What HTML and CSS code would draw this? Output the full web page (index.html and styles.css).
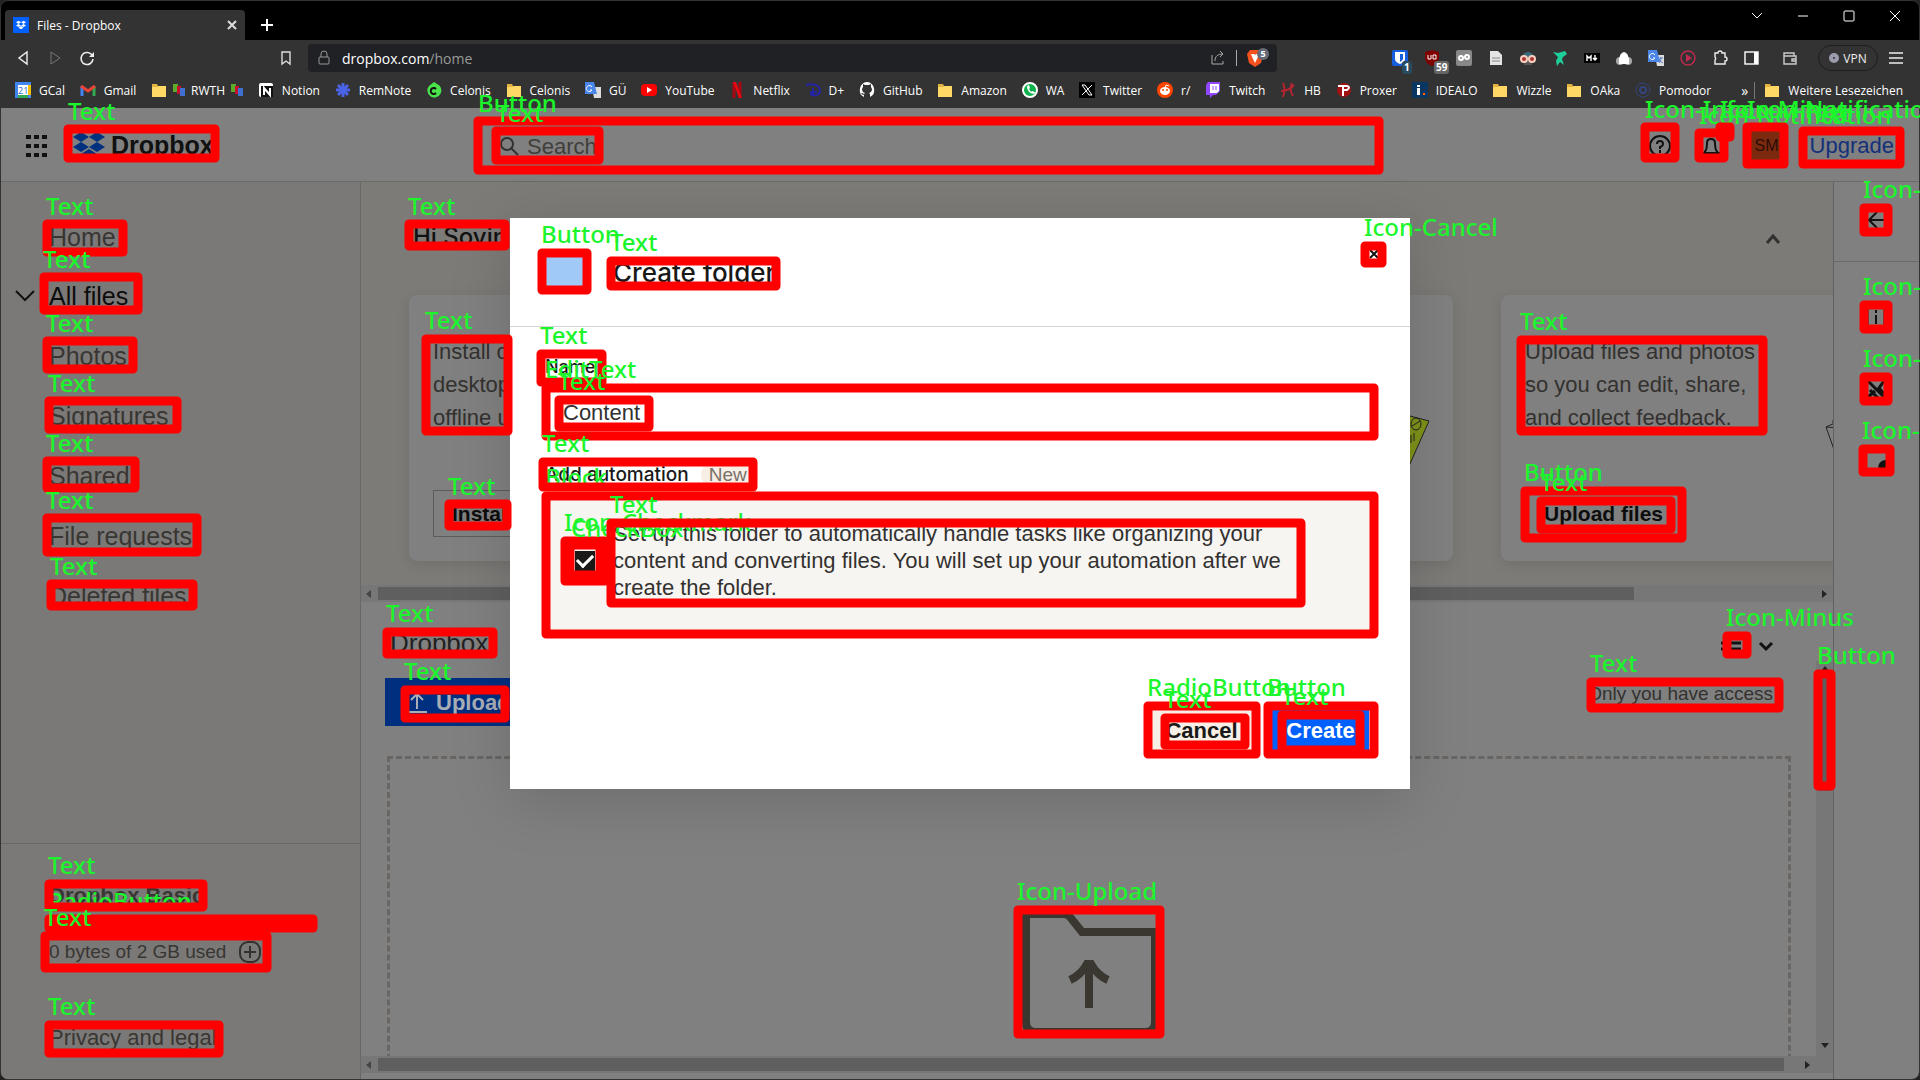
FILE: index.html
```html
<!DOCTYPE html>
<html lang="en">
<head>
<meta charset="utf-8">
<title>Files - Dropbox</title>
<link rel="stylesheet" href="styles.css">
</head>
<body>
<svg class="defs" aria-hidden="true">
  <symbol id="folder" viewBox="0 0 16 16"><path d="M1 2h5l1 2h8v11H1z" fill="#e3b341"/><path d="M1 5h5l2-1h7v11H1z" fill="#ffd866"/></symbol>
  <symbol id="flag" viewBox="0 0 12 14"><path d="M0 1h5v8H0z" fill="#5cab2b"/><path d="M4 3h4v8H4z" fill="#c8102e"/><path d="M7 5h5v8H7z" fill="#3f6fd1"/></symbol>
  <symbol id="box" viewBox="0 0 32 27"><path d="M8 0l8 5-8 5-8-5zM24 0l8 5-8 5-8-5zM8 10l8 5-8 5-8-5zM24 10l8 5-8 5-8-5zM16 17l8 5-8 5-8-5z"/></symbol>
</svg>
<div class="window">
  <div class="tabs">
    <div class="tab"><svg class="i16" viewBox="0 0 16 16"><path d="M0 0h16v16H0z" fill="#0061fe"/><use href="#box" x="3" y="3" width="10" height="10" fill="#fff"/></svg><span>Files - Dropbox</span><svg class="close" viewBox="0 0 10 10"><path d="M1 1l8 8M9 1l-8 8" stroke="#ddd" stroke-width="2"/></svg></div>
    <svg class="plus" viewBox="0 0 12 12"><path d="M6 0v12M0 6h12" stroke="#fff" stroke-width="2"/></svg>
    <div class="winbtns">
      <svg viewBox="0 0 12 12"><path d="M1 3l5 5 5-5"/></svg><svg viewBox="0 0 12 12"><path d="M1 6h10"/></svg><svg viewBox="0 0 12 12"><rect x="1" y="1" width="10" height="10" rx="1"/></svg><svg viewBox="0 0 12 12"><path d="M1 1l10 10M11 1L1 11"/></svg>
    </div>
  </div>
  <div class="toolbar">
    <svg class="i16" viewBox="0 0 16 16"><path d="M12 2v12L4 8z" fill="none" stroke="#eee" stroke-width="1.4"/></svg>
    <svg class="i16" viewBox="0 0 16 16"><path d="M4 2v12l9-6z" fill="none" stroke="#777" stroke-width="1"/></svg>
    <svg class="i16" viewBox="0 0 16 16"><path d="M14 9a6 6 0 1 1-2-5l2 2" fill="none" stroke="#eee" stroke-width="1.6"/><path d="M15 2v5h-5z" fill="#eee"/></svg>
    <svg class="i16 mark" viewBox="0 0 16 16"><path d="M4 2h8v12l-4-3-4 3z" fill="none" stroke="#ddd" stroke-width="1.4"/></svg>
    <div class="address">
      <svg class="i16" viewBox="0 0 16 16"><rect x="3" y="7" width="10" height="7" rx="1" fill="none" stroke="#999"/><path d="M5 7V4a3 3 0 0 1 6 0v3" fill="none" stroke="#999"/></svg>
      <span class="url">dropbox.com<i>/home</i></span>
      <svg class="i16" viewBox="0 0 16 16"><path d="M2 5v9h11v-3M5 11c0-5 3-7 8-7M10 1l3 3-3 3" fill="none" stroke="#aaa"/></svg>
      <span class="bar"></span>
      <span class="brave"><svg viewBox="0 0 16 18"><path d="M3 1h10l3 4-2 9-6 4-6-4L0 5z" fill="#f4511e"/><path d="M4 5h3l1 1 1-1h3l-2 5-2 4-2-4z" fill="#fff"/></svg><b>5</b></span>
    </div>
    <div class="exts">
      <span class="ext"><svg class="i16" viewBox="0 0 16 16"><rect width="16" height="16" rx="2" fill="#175ddc"/><path d="M3 2h10v7q0 3-5 5-5-2-5-5z" fill="#fff"/><path d="M8 4h3v5q0 1-3 3z" fill="#175ddc"/></svg><b class="teal">1</b></span>
      <span class="ext"><svg class="i16" viewBox="0 0 16 16"><path d="M8 0l7 2v6q0 5-7 8-7-3-7-8V2z" fill="#800000"/><path d="M4 5v4h3V5M9 9V5h3v4z" fill="none" stroke="#fff"/></svg><b>59</b></span>
      <svg class="i16" viewBox="0 0 16 16"><rect width="16" height="16" rx="2" fill="#888"/><circle cx="5" cy="8" r="2" fill="none" stroke="#fff" stroke-width="2"/><circle cx="11" cy="7" r="2" fill="none" stroke="#fff" stroke-width="2"/></svg>
      <svg class="i16" viewBox="0 0 16 16"><path d="M2 1h8l4 4v10H2z" fill="#e4e4e4"/><path d="M4 8h8M4 11h8" stroke="#888"/></svg>
      <svg class="i16" viewBox="0 0 16 16"><path d="M2 8a6 6 0 0 1 12 0z" fill="#35697c"/><path d="M4 11h8v4H4z" fill="#555"/><circle cx="4" cy="9" r="3" fill="#a33" stroke="#fbd0c0" stroke-width="2"/><circle cx="12" cy="9" r="3" fill="#a33" stroke="#fbd0c0" stroke-width="2"/></svg>
      <svg class="i16" viewBox="0 0 16 16"><path d="M1 2l5 1 7-2 2 3-4 3-1 2 2 6-4-3-3 4-1-5 2-4z" fill="#1fcf9b"/></svg>
      <svg class="i16" viewBox="0 0 16 16"><rect y="3" width="16" height="10" fill="#000"/><path d="M3 11V6l2 2 2-2v5M11 5v5M9 8l2 2 2-2" fill="none" stroke="#fff" stroke-width="1.4"/></svg>
      <svg class="i16" viewBox="0 0 16 16"><circle cx="4" cy="11" r="4" fill="#aaa"/><circle cx="12" cy="11" r="4" fill="#aaa"/><path d="M3 14V9q1-6 5-7 4 1 5 7v5z" fill="#fff"/></svg>
      <svg class="i16" viewBox="0 0 16 16"><path d="M7 5h9v11H9z" fill="#ddd"/><path d="M0 0h9l3 12H0z" fill="#4a86e8"/><path d="M7 5a3 3 0 1 0 0 3H5" fill="none" stroke="#fff"/><path d="M11 8h4M13 7v1q0 4-2 5M11 9q1 3 4 4" fill="none" stroke="#5a7fc0"/></svg>
      <svg class="i16" viewBox="0 0 16 16"><circle cx="8" cy="8" r="7" fill="none" stroke="#c2294e" stroke-width="1.4"/><path d="M6 4l6 4-6 4z" fill="#c2294e"/></svg>
      <svg class="i16" viewBox="0 0 16 16"><path d="M3 3h3a2 2 0 0 1 4 0h3v4a2 2 0 0 1 0 4v3H3v-4a2 2 0 0 0 0-3z" fill="none" stroke="#eee" stroke-width="1.4"/></svg>
      <svg class="i16" viewBox="0 0 16 16"><rect x="1" y="2" width="13" height="12" fill="none" stroke="#fff" stroke-width="1.4"/><path d="M10 2h4v12h-4z" fill="#fff"/></svg>
      <svg class="i16 wallet" viewBox="0 0 16 16"><path d="M2 3h10v3h2v8H2zM2 6h10M14 9h-4v2h4" fill="none" stroke="#ccc" stroke-width="1.4"/></svg>
    </div>
    <button class="vpn"><i></i>VPN</button>
    <svg class="i16" viewBox="0 0 16 16"><path d="M1 3h14M1 8h14M1 13h14" stroke="#eee" stroke-width="1.4"/></svg>
  </div>
  <div class="bookmarks">
    <div class="marks">
      <a href="#"><svg viewBox="0 0 16 16"><path d="M0 0h16v16H0z" fill="#4285f4"/><path d="M13 3h3v10h-3z" fill="#fbbc04"/><path d="M3 13h10v3H3z" fill="#34a853"/><path d="M3 3h10v10H3z" fill="#fff"/><text x="3" y="12" font-size="9" fill="#1967d2">21</text></svg>GCal</a>
      <a href="#"><svg viewBox="0 0 16 16"><path d="M2 14V4" stroke="#4285f4" stroke-width="3"/><path d="M14 14V4" stroke="#34a853" stroke-width="3"/><path d="M1 4l7 5 7-5" fill="none" stroke="#ea4335" stroke-width="3"/></svg>Gmail</a>
      <a href="#" class="rwth"><svg><use href="#folder"/></svg><svg class="flag"><use href="#flag"/></svg>RWTH<svg class="flag"><use href="#flag"/></svg></a>
      <a href="#"><svg viewBox="0 0 16 16"><rect x="1" y="1" width="14" height="14" rx="2" fill="#fff"/><path d="M3 4h12v11H3z" fill="#111"/><path d="M6 13V6l6 7V6" fill="none" stroke="#fff" stroke-width="2"/></svg>Notion</a>
      <a href="#"><svg viewBox="0 0 16 16"><path d="M8 1v14M1 8h14M3 3l10 10M13 3L3 13" stroke="#4b63e6" stroke-width="3"/></svg>RemNote</a>
      <a href="#"><svg viewBox="0 0 16 16"><path d="M8 0l3 2a7 7 0 1 1-8 2z" fill="#4be34b"/><path d="M10 7a3 3 0 1 0 0 4" fill="none" stroke="#111" stroke-width="2"/></svg>Celonis</a>
      <a href="#"><svg><use href="#folder"/></svg>Celonis</a>
      <a href="#"><svg viewBox="0 0 16 16"><path d="M7 5h9v11H9z" fill="#ddd"/><path d="M0 0h9l3 12H0z" fill="#4a86e8"/><path d="M7 5a3 3 0 1 0 0 3H5" fill="none" stroke="#fff"/></svg>GÜ</a>
      <a href="#"><svg viewBox="0 0 16 16"><rect y="2" width="16" height="12" rx="4" fill="#f00"/><path d="M6 5l5 3-5 3z" fill="#fff"/></svg>YouTube</a>
      <a href="#"><svg viewBox="0 0 16 16"><path d="M5 0v16M11 0v16" stroke="#a80610" stroke-width="3"/><path d="M4 0h3l6 16h-3z" fill="#e50914"/></svg>Netflix</a>
      <a href="#"><svg viewBox="0 0 16 16"><path d="M1 3c9-2 14 1 14 6s-8 5-9 3 1-3 6-2M8 6v8" fill="none" stroke="#2323a8" stroke-width="2"/></svg>D+</a>
      <a href="#"><svg viewBox="0 0 16 16"><path d="M8 0a8 8 0 0 0-3 15v-2q-2 0-3-2 2 0 3 1l1-1Q3 10 3 7l1-2V2l2 1h4l2-1v3l1 2q0 3-3 4l1 1v3A8 8 0 0 0 8 0" fill="#fff"/></svg>GitHub</a>
      <a href="#"><svg><use href="#folder"/></svg>Amazon</a>
      <a href="#"><svg viewBox="0 0 16 16"><circle cx="8" cy="8" r="7" fill="#0db14b" stroke="#fff" stroke-width="2"/><path d="M5 4q0 7 7 8l1-2-3-1-1 1-2-3 1-1-1-3z" fill="#fff"/></svg>WA</a>
      <a href="#"><svg viewBox="0 0 16 16"><path d="M0 0h16v16H0z"/><path d="M3 3h3l7 10h-3zM13 3L3 13" fill="none" stroke="#fff"/></svg>Twitter</a>
      <a href="#"><svg viewBox="0 0 16 16"><circle cx="8" cy="8" r="8" fill="#ff4500"/><ellipse cx="8" cy="9" rx="5" ry="4" fill="#fff"/><path d="M8 6l1-3 3 1" fill="none" stroke="#fff"/><circle cx="6" cy="8" r="1" fill="#ff4500"/><circle cx="10" cy="8" r="1" fill="#ff4500"/></svg>r/</a>
      <a href="#"><svg viewBox="0 0 16 16"><path d="M1 3l2-3h12v9l-4 4H8l-3 3v-3H1z" fill="#9146ff"/><path d="M5 2h9v7l-2 2H5z" fill="#fff"/><path d="M8 4v4M11 4v4" stroke="#9146ff"/></svg>Twitch</a>
      <a href="#"><svg viewBox="0 0 16 16"><path d="M3 1q3 6 0 14M12 1q-3 7 1 13M1 9q8 0 13-6" fill="none" stroke="#b3262f" stroke-width="2"/></svg>HB</a>
      <a href="#"><svg viewBox="0 0 16 16"><circle cx="8" cy="8" r="7" fill="#a11212"/><path d="M2 4h9q4 1 0 4H8M7 4v10" fill="none" stroke="#fff" stroke-width="2"/></svg>Proxer</a>
      <a href="#"><svg viewBox="0 0 16 16"><path d="M0 0h16v16H0z" fill="#0a3761"/><path d="M5 3h3v2H5zM5 6h3v7H5z" fill="#fff"/><path d="M11 11h2v2h-2z" fill="#f60"/></svg>IDEALO</a>
      <a href="#"><svg><use href="#folder"/></svg>Wizzle</a>
      <a href="#"><svg><use href="#folder"/></svg>OAka</a>
      <a href="#"><svg viewBox="0 0 16 16"><circle cx="8" cy="8" r="7" fill="none" stroke="#34457e"/><circle cx="8" cy="8" r="3" fill="none" stroke="#34457e" stroke-width="2"/></svg>Pomodor</a>
    </div>
    <span class="more">»</span>
    <a href="#" class="other"><svg><use href="#folder"/></svg>Weitere Lesezeichen</a>
  </div>

  <div class="page">
    <header class="top">
      <svg class="apps" viewBox="0 0 22 22"><path d="M0 2h5M8 2h5M16 2h5M0 11h5M8 11h5M16 11h5M0 20h5M8 20h5M16 20h5" stroke="#111" stroke-width="4"/></svg>
      <a class="brand" href="#"><svg viewBox="0 0 32 27"><use href="#box"/></svg>Dropbox</a>
      <label class="search"><svg viewBox="0 0 20 20"><circle cx="8" cy="8" r="6"/><path d="M12 12l7 7"/></svg><input type="text" placeholder="Search" aria-label="Search"></label>
      <div class="account">
        <svg class="i24" viewBox="0 0 24 24"><circle cx="12" cy="12" r="10"/><path d="M9 10q0-3 3-3t3 3q0 2-3 3v2M12 16v3"/></svg>
        <svg class="i24" viewBox="0 0 24 24"><path d="M5 18q3-1 3-9 0-4 4-4t4 4q0 8 3 9M3 19h18"/></svg>
        <span class="avatar">SM</span>
        <a href="#" class="upgrade">Upgrade</a>
      </div>
    </header>
    <aside class="side">
      <nav>
        <a href="#">Home</a>
        <a href="#" class="on"><svg viewBox="0 0 20 12"><path d="M1 1l9 9 9-9"/></svg>All files</a>
        <a href="#">Photos</a><a href="#">Signatures</a><a href="#">Shared</a><a href="#">File requests</a><a href="#">Deleted files</a>
      </nav>
      <div class="plan">
        <b>Dropbox Basic</b>
        <div class="quota">0 bytes of 2 GB used<svg viewBox="0 0 22 22"><rect x="1" y="1" width="20" height="20" rx="8"/><path d="M11 5v12M5 11h12"/></svg></div>
        <a href="#">Privacy and legal</a>
      </div>
    </aside>
    <main>
      <section class="home">
        <div class="hello"><h1>Hi Sovin</h1><svg viewBox="0 0 14 10"><path d="M1 9l6-7 6 7"/></svg></div>
        <div class="cards">
          <article class="card"><p>Install on<br>desktop for<br>offline use</p><button>Install</button></article>
          <article class="card"><svg class="note" viewBox="0 0 44 60"><path d="M6 0l38 10-20 45-24 5z" fill="#7f931a" stroke="#222"/><ellipse cx="31" cy="13" rx="5" ry="6" fill="none" stroke="#222"/><path d="M27 15l8-5M26 24v8M29 22v8" stroke="#222"/></svg></article>
          <article class="card"><p>Upload files and photos<br>so you can edit, share,<br>and collect feedback.</p><button>Upload files</button><svg class="sketch" viewBox="0 0 40 40"><path d="M1 7l9-4h20v35H12zM1 7l14 1M8 3V0" fill="none" stroke="#222"/></svg></article>
        </div>
        <div class="hbar"><svg viewBox="0 0 6 8"><path d="M5 0v8L0 4z" fill="#444"/></svg><i class="part"></i><svg viewBox="0 0 6 8"><path d="M0 0v8l5-4z"/></svg></div>
      </section>
      <section class="files">
        <div class="content">
          <div class="row"><h2>Dropbox</h2><span class="view"><svg class="lines" viewBox="0 0 20 14"><path d="M0 4h20M0 10h20"/></svg><svg class="chev" viewBox="0 0 14 9"><path d="M1 1l6 6 6-6"/></svg></span></div>
          <div class="row tools"><button class="upload"><svg viewBox="0 0 20 20"><path d="M10 16V1M4 7l6-6 6 6M0 19h20"/></svg>Upload</button><span class="access">Only you have access</span></div>
          <div class="drop"><svg viewBox="0 0 140 128"><path d="M7 4h36q6 0 8 3l12 15h73v90q0 10-10 10H17q-10 0-10-10z"/><path d="M70 98V52M51 70q11-5 17-16h4q6 11 17 16"/></svg></div>
        </div>
        <div class="vbar"><svg viewBox="0 0 8 6"><path d="M0 5h8L4 0z"/></svg><i></i><svg viewBox="0 0 8 6"><path d="M0 0h8L4 5z"/></svg></div>
        <div class="hbar"><svg viewBox="0 0 6 8"><path d="M5 0v8L0 4z" fill="#444"/></svg><i></i><svg class="inset" viewBox="0 0 6 8"><path d="M0 0v8l5-4z"/></svg></div>
      </section>
    </main>
    <aside class="rail">
      <div class="first"><svg viewBox="0 0 24 24"><path d="M20 12H6M13 4l-8 8 8 8"/></svg></div>
      <svg viewBox="0 0 24 24"><path d="M12 10v9M12 5v3"/><path d="M4 22V4M20 4v18" stroke-width="1"/></svg>
      <svg viewBox="0 0 24 24"><path d="M4 4l16 16M20 4l-5 7 5 6M4 20l7-6M6 13l8 8" stroke-width="3"/></svg>
      <svg viewBox="0 0 24 24"><path d="M21 20h-6q0-7 6-8z" fill="#111"/></svg>
    </aside>
  </div>
</div>

<div class="overlay">
  <form class="modal">
    <header><span class="foldericon"></span><h2>Create folder</h2><button type="button" class="x" aria-label="Close"><svg viewBox="0 0 12 12"><path d="M2 2l8 8M10 2l-8 8"/></svg></button></header>
    <div class="body">
      <label class="lab" for="name">Name</label>
      <input class="field" id="name" type="text" value="Content">
      <div class="lab auto">Add automation<span>New</span></div>
      <div class="block">
        <input type="checkbox" id="auto" checked>
        <label for="auto">Set up this folder to automatically handle tasks like organizing your content and converting files. You will set up your automation after we create the folder.</label>
      </div>
      <div class="actions"><button type="button" class="cancel">Cancel</button><button type="button" class="create">Create</button></div>
    </div>
  </form>
</div>

<svg class="marksup" viewBox="0 0 1920 1080">
  <rect x="68" y="129" width="147" height="29"/><text x="68" y="120">Text</text>
  <rect x="478" y="121" width="901" height="49"/><text x="478" y="112">Button</text>
  <rect x="496" y="131" width="103" height="29"/><text x="496" y="122">Text</text>
  <rect x="1645" y="127" width="30" height="31"/><text x="1645" y="118">Icon-Info</text>
  <rect x="1699" y="133" width="25" height="25"/><text x="1699" y="124">Icon-Notification</text>
  <rect x="1720" y="127" width="10" height="10"/><text x="1720" y="118">Icon-Minus</text>
  <rect x="1747" y="127" width="37" height="37"/><text x="1747" y="118">Icon-Notification</text>
  <rect x="1803" y="131" width="97" height="33"/><text x="1803" y="122">Text</text>
  <rect x="47" y="224" width="76" height="28"/><text x="46" y="215">Text</text>
  <rect x="44" y="277" width="94" height="33"/><text x="43" y="268">Text</text>
  <rect x="47" y="341" width="86" height="28"/><text x="46" y="332">Text</text>
  <rect x="49" y="401" width="128" height="28"/><text x="48" y="392">Text</text>
  <rect x="47" y="461" width="88" height="27"/><text x="46" y="452">Text</text>
  <rect x="47" y="518" width="150" height="34"/><text x="46" y="509">Text</text>
  <rect x="51" y="584" width="142" height="22"/><text x="50" y="575">Text</text>
  <rect x="409" y="224" width="96" height="22"/><text x="408" y="215">Text</text>
  <rect x="426" y="339" width="82" height="92"/><text x="425" y="329">Text</text>
  <rect x="449" y="504" width="58" height="22"/><text x="448" y="495">Text</text>
  <rect x="49" y="919" width="264" height="9"/><text x="48" y="910">RadioButton</text>
  <rect x="49" y="884" width="154" height="23"/><text x="48" y="874">Text</text>
  <rect x="45" y="936" width="222" height="32"/><text x="44" y="926">Text</text>
  <rect x="49" y="1025" width="170" height="28"/><text x="48" y="1015">Text</text>
  <rect x="542" y="253" width="45" height="37"/><text x="541" y="243">Button</text>
  <rect x="611" y="261" width="165" height="25"/><text x="610" y="251">Text</text>
  <rect x="541" y="354" width="61" height="28"/><text x="540" y="344">Text</text>
  <rect x="546" y="388" width="828" height="48"/><text x="545" y="378">EditText</text>
  <rect x="559" y="400" width="90" height="27"/><text x="558" y="390">Text</text>
  <text x="545" y="486">Block</text>
  <rect x="543" y="462" width="210" height="25"/><text x="542" y="452">Text</text>
  <rect x="546" y="496" width="828" height="138"/>
  <rect x="565" y="541" width="40" height="40"/><text x="571" y="537">CheckBox</text>
  <rect x="570" y="545" width="30" height="30"/><text x="564" y="531">Icon-Checkmark</text>
  <rect x="611" y="523" width="690" height="80"/><text x="610" y="513">Text</text>
  <rect x="1148" y="706" width="108" height="48"/><text x="1147" y="696">RadioButton</text>
  <rect x="1165" y="718" width="80" height="27"/><text x="1164" y="708">Text</text>
  <rect x="1268" y="706" width="106" height="48"/><text x="1267" y="696">Button</text>
  <rect x="1282" y="715" width="78" height="35"/><text x="1281" y="705">Text</text>
  <rect x="1365" y="246" width="17" height="17"/><text x="1364" y="236">Icon-Cancel</text>
  <rect x="1521" y="340" width="242" height="91"/><text x="1520" y="330">Text</text>
  <rect x="1525" y="491" width="157" height="47"/><text x="1524" y="481">Button</text>
  <rect x="1541" y="501" width="130" height="28"/><text x="1540" y="491">Text</text>
  <rect x="1864" y="208" width="24" height="24"/><text x="1863" y="198">Icon-ArrowBackward</text>
  <rect x="1864" y="305" width="24" height="24"/><text x="1863" y="295">Icon-Info</text>
  <rect x="1864" y="377" width="24" height="24"/><text x="1863" y="367">Icon-Cancel</text>
  <rect x="1863" y="449" width="27" height="23"/><text x="1862" y="439">Icon-Chat</text>
  <rect x="1727" y="636" width="20" height="18"/><text x="1726" y="626">Icon-Minus</text>
  <rect x="1591" y="682" width="188" height="26"/><text x="1590" y="672">Text</text>
  <rect x="1818" y="674" width="13" height="112"/><text x="1817" y="664">Button</text>
  <rect x="387" y="632" width="106" height="22"/><text x="386" y="622">Text</text>
  <rect x="405" y="690" width="100" height="28"/><text x="404" y="680">Text</text>
  <rect x="1018" y="910" width="142" height="124"/><text x="1017" y="900">Icon-Upload</text>
</svg>
</body>
</html>
```
FILE: styles.css
```css
* { box-sizing: border-box; }
body { margin: 0; height: 100vh; overflow: hidden; position: relative; background: #222; font-family: "Liberation Sans", Arial, sans-serif; color: #33312f; }
h1, h2, p { margin: 0; font-weight: 400; }
a { color: inherit; text-decoration: none; }
button { font-family: inherit; border: 0; padding: 0; color: inherit; }
svg { display: block; flex: none; overflow: visible; }
.defs { position: absolute; width: 0; height: 0; }
.i16 { width: 16px; height: 16px; }

.window { display: flex; flex-direction: column; height: 100%; border: 1px solid #333; border-radius: 8px; overflow: hidden; background: #000; }

/* browser chrome */
.tabs { flex: none; display: flex; height: 39px; padding-left: 4px; align-items: flex-end; }
.tab { display: flex; align-items: center; width: 240px; height: 30px; padding: 0 8px; gap: 8px; background: #333; border-radius: 4px 4px 0 0; color: #fff; font: 12px "Open Sans", sans-serif; }
.tab span { flex: 1; }
.tab .close { width: 10px; height: 10px; }
.plus { width: 12px; height: 12px; margin: 0 16px 9px; }
.winbtns { display: flex; gap: 34px; margin-left: auto; padding-right: 18px; align-self: flex-start; margin-top: 9px; }
.winbtns svg { width: 12px; height: 12px; fill: none; stroke: #fff; }
.toolbar { flex: none; display: flex; align-items: center; height: 36px; padding: 0 15px 0 14px; background: #333; }
.toolbar > .i16:nth-child(-n+2) { margin-right: 16px; }
.mark { margin-left: 183px; margin-right: 14px; }
.address { flex: 1; display: flex; align-items: center; height: 28px; padding: 0 8px; gap: 10px; background: #202124; border-radius: 4px; font: 14px "Open Sans", sans-serif; color: #fff; }
.url { flex: 1; }
.url i { font-style: normal; color: #999; }
.bar { width: 1px; height: 16px; background: #aaa; }
.brave { display: flex; align-items: center; }
.brave svg { width: 16px; height: 18px; }
.brave b { margin: -8px 0 0 -6px; width: 12px; height: 12px; border-radius: 6px; background: #666a76; font: 700 9px/12px "Open Sans", sans-serif; text-align: center; }
.exts { display: flex; gap: 16px; align-items: center; margin: 0 20px 0 115px; }
.wallet { margin-left: 6px; }
.ext { display: flex; width: 16px; }
.ext b { flex: none; align-self: flex-end; margin: 0 0 -8px -6px; padding: 0 2px; background: #666; color: #fff; border-radius: 3px; font: 700 10px/13px "Open Sans", sans-serif; }
.ext b.teal { background: #2a4a60; }
.vpn { display: flex; align-items: center; justify-content: center; gap: 4px; width: 60px; height: 26px; margin-right: 10px; background: none; border: 1px solid #1f1f1f; border-radius: 13px; color: #eee; font: 12px "Open Sans", sans-serif; }
.vpn i { width: 10px; height: 10px; border-radius: 5px; background: #333; border: 4px solid #9a9cae; }
.bookmarks { flex: none; display: flex; align-items: center; height: 32px; padding: 0 16px 4px 14px; background: #333; color: #fff; font: 12px "Open Sans", sans-serif; }
.marks { flex: 1; display: flex; justify-content: space-between; }
.bookmarks a { display: flex; align-items: center; gap: 8px; }
.bookmarks svg { width: 16px; height: 16px; }
.bookmarks .flag { width: 12px; height: 14px; }
.bookmarks .rwth { gap: 6px; }
.more { margin: 0 6px 0 30px; font-size: 14px; }
.other { border-left: 1px solid #777; padding-left: 9px; }

/* page */
.page { flex: 1; min-height: 0; display: grid; grid-template: 74px minmax(0, 1fr) / 360px minmax(0, 1fr) 86px; background: #808080; }
.top { grid-column: 1 / -1; display: flex; align-items: center; border-bottom: 1px solid #6b6a69; padding: 2px 25px 0 25px; }
.apps { width: 22px; height: 22px; }
.brand { display: flex; align-items: center; gap: 6px; margin-left: 25px; width: 401px; font-size: 25px; font-weight: 700; color: #111; }
.brand svg { width: 32px; height: 27px; fill: #00307e; }
.search { display: flex; align-items: center; gap: 8px; flex: 1; margin-right: 268px; height: 49px; padding-left: 25px; }
.search svg { width: 20px; height: 20px; fill: none; stroke: #33312f; stroke-width: 2; }
.search input { flex: 1; padding: 2px 0 0; border: 0; background: none; font: 22px "Liberation Sans", sans-serif; outline: 0; }
.search input::placeholder { color: #403e3c; opacity: 1; }
.account { display: flex; align-items: center; }
.i24 { width: 24px; height: 24px; margin-right: 27px; fill: none; stroke: #111; stroke-width: 2; }
.avatar { width: 34px; height: 34px; margin-right: 26px; background: #7b2a10; color: #2c0d05; font-size: 16px; line-height: 34px; text-align: center; }
.upgrade { font-size: 22px; color: #14307a; }

.side { display: flex; flex-direction: column; background: #7b7977; border-right: 1px solid #6a6866; font-size: 25px; color: #383633; }
nav { flex: 1; padding-top: 27px; }
nav a { display: flex; align-items: center; height: 60px; padding-left: 48px; }
nav a:first-child { height: 57px; }
nav .on { color: #0d0d0d; padding-left: 14px; gap: 14px; }
nav svg { width: 20px; height: 12px; fill: none; stroke: #111; stroke-width: 2; }
.plan { display: flex; flex-direction: column; height: 236px; padding: 38px 0 0 48px; border-top: 1px solid #6a6866; font-size: 22px; line-height: 28px; }
.quota { display: flex; align-items: center; gap: 13px; margin: 28px 0 58px; font-size: 19px; }
.quota svg { width: 22px; height: 22px; fill: none; stroke: #33312f; stroke-width: 2; }

main { display: flex; flex-direction: column; min-width: 0; min-height: 0; }
.home { flex: none; background: #7c7b78; overflow: hidden; }
.hello { display: flex; align-items: center; justify-content: space-between; height: 113px; padding: 0 53px 0 52px; }
.hello h1 { font: 500 24px Inter, sans-serif; color: #111; margin-top: -4px; }
.hello svg { width: 14px; height: 10px; fill: none; stroke: #33312f; stroke-width: 3; }
.cards { display: flex; gap: 48px; padding: 0 48px 24px; width: 100%; }
.card { flex: none; position: relative; display: flex; flex-direction: column; align-items: flex-start; width: 498px; height: 266px; padding: 40px 24px 24px; border-radius: 8px; background: #808080; box-shadow: 0 3px 14px rgba(0,0,0,.1); font-size: 22px; line-height: 33px; }
.card button { margin-top: auto; height: 47px; padding: 0 18px; background: none; border: 1px solid #5f5b58; font-size: 21px; font-weight: 700; color: #0d0d0d; }
.note { position: absolute; right: 24px; top: 116px; width: 44px; height: 60px; }
.sketch { position: absolute; left: 324px; top: 125px; width: 40px; height: 40px; }
.hbar { flex: none; display: flex; align-items: center; height: 17px; padding: 0 5px; background: #777; }
.hbar svg { width: 6px; height: 8px; fill: #222; }
.hbar i { flex: 1; height: 13px; margin: 0 21px 0 6px; background: #5f5f5f; }
.hbar .part { margin-right: 188px; }
.hbar .inset { margin-right: 17px; }
.files { flex: 1; min-height: 0; display: grid; grid-template: minmax(0, 1fr) 17px 6px / minmax(0, 1fr) 17px; }
.files .hbar { grid-column: 1 / -1; }
.content { display: flex; flex-direction: column; min-height: 0; padding: 22px 25px 0 24px; overflow: hidden; }
.row { flex: none; display: flex; justify-content: space-between; align-items: center; height: 44px; padding-right: 18px; }
.row h2 { padding-left: 5px; margin-top: -6px; font-size: 26px; color: #222; }
.tools { height: 68px; margin-bottom: 20px; }
.view { display: flex; align-items: center; gap: 18px; }
.lines { width: 20px; height: 14px; stroke: #111; stroke-width: 3; }
.chev { width: 14px; height: 9px; fill: none; stroke: #111; stroke-width: 3; }
.upload { display: flex; align-items: center; gap: 9px; height: 48px; width: 180px; background: #002f80; color: #a9adb5; font-size: 22px; font-weight: 700; }
.row .upload { padding: 2px 0 0 22px; }
.upload svg { width: 20px; height: 20px; fill: none; stroke: #a9adb5; stroke-width: 2; }
.access { font-size: 19px; padding-bottom: 16px; }
.drop { flex: none; height: 430px; display: flex; justify-content: center; padding-top: 151px; margin-left: 2px; border: 3px dashed #686562; }
.drop svg { width: 140px; height: 128px; fill: none; stroke: #3a3731; stroke-width: 8; }
.vbar { display: flex; flex-direction: column; align-items: center; margin-top: 59px; padding: 5px 0 7px; background: #777; }
.vbar svg { width: 8px; height: 6px; fill: #222; }
.vbar i { width: 13px; height: 113px; margin: 6px 0 auto; background: #5f5f5f; }
.rail { display: flex; flex-direction: column; align-items: center; gap: 48px; border-left: 1px solid #626160; }
.rail svg { width: 24px; height: 24px; margin-right: 2px; fill: none; stroke: #111; stroke-width: 2; }
.first { display: flex; justify-content: center; width: 100%; height: 80px; padding-top: 26px; margin-bottom: -5px; border-bottom: 1px solid #6b6a69; }

/* dialog */
.overlay { position: absolute; inset: 0; display: flex; justify-content: center; align-items: flex-start; padding-top: 218px; }
.modal { width: 900px; padding-bottom: 34px; background: #fff; box-shadow: 0 12px 56px rgba(0,0,0,.15); color: #1a1918; }
.modal header { display: flex; align-items: center; height: 109px; padding: 0 30px 0 34px; border-bottom: 1px solid #d5d5d5; }
.foldericon { width: 41px; height: 33px; background: #a1c9f7; }
.modal h2 { flex: 1; margin-left: 28px; font: 500 26px Inter, sans-serif; }
.x { align-self: flex-start; margin-top: 30px; background: none; }
.x svg { width: 12px; height: 12px; stroke: #111; stroke-width: 2; }
.body { padding: 28px 35px 0; }
.lab { display: block; font: 500 18px/24px Inter, sans-serif; }
.field { width: 100%; height: 48px; margin: 9px 0 27px; padding: 2px 17px 0; border: 1px solid #aaa; font: 22px "Liberation Sans", sans-serif; color: #33312f; }
.auto { display: flex; align-items: center; gap: 12px; margin-bottom: 9px; font-size: 19px; }
.auto span { padding: 0 8px; border-radius: 12px; background: #f7efe6; color: #78716a; font: 19px/24px "Liberation Sans", sans-serif; }
.block { display: flex; align-items: flex-start; gap: 18px; height: 139px; padding: 24px 30px; background: #f7f5f2; font-size: 22px; line-height: 27px; color: #33312f; }
.block label { max-width: 710px; }
.block input { flex: none; appearance: none; width: 20px; height: 20px; margin: 31px 0 0; background: #1a1918; display: grid; place-items: center; }
.block input::after { content: ""; width: 7px; height: 13px; margin-top: -4px; border: solid #fff; border-width: 0 3px 3px 0; transform: rotate(45deg); }
.actions { display: flex; justify-content: flex-end; gap: 20px; margin-top: 72px; padding-right: 6px; }
.actions button { height: 48px; font-size: 22px; font-weight: 700; }
.cancel { width: 101px; background: #f7efe6; }
.create { width: 97px; background: #0061fe; color: #fff; }

/* labelled detection frames */
.marksup { position: absolute; left: 0; top: 0; width: 1920px; height: 1080px; overflow: hidden; pointer-events: none; }
.marksup rect { fill: none; stroke: #f00; stroke-width: 9; stroke-linejoin: round; }
.marksup text { font: 500 24px "Noto Sans", sans-serif; fill: #1cf52c; }
```
